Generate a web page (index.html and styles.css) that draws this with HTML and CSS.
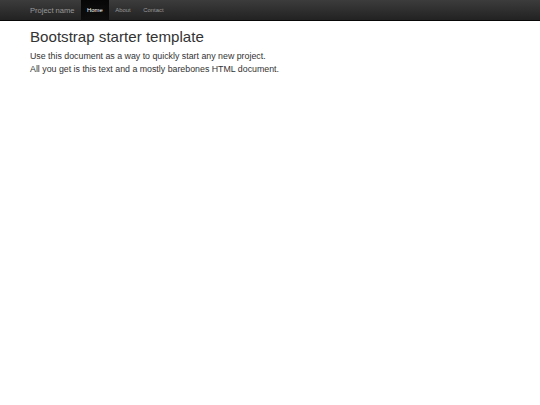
FILE: index.html
```html
<!DOCTYPE html>
<html lang="en">
<head>
<meta charset="utf-8">
<title>Starter Template for Bootstrap</title>
<link rel="stylesheet" href="styles.css">
</head>
<body>
<div class="navbar">
  <div class="container nav-inner">
    <a class="brand" href="#">Project name</a>
    <ul class="nav">
      <li class="active"><a href="#">Home</a></li>
      <li><a href="#about">About</a></li>
      <li><a href="#contact">Contact</a></li>
    </ul>
  </div>
</div>
<div class="container">
  <div class="starter">
    <h1>Bootstrap starter template</h1>
    <p class="lead">Use this document as a way to quickly start any new project.<br> All you get is this text and a mostly barebones HTML document.</p>
  </div>
</div>
</body>
</html>
```
FILE: styles.css
```css
html, body {
  margin: 0;
  padding: 0;
  background: #fff;
}
body {
  font-family: "Liberation Sans", Arial, Helvetica, sans-serif;
  font-size: 5.88px;
  line-height: 8.4px;
  color: #333;
}
.container {
  box-sizing: border-box;
  width: 492.6px;
  padding: 0 6.3px;
  margin: 0 auto;
}
.navbar {
  height: 21px;
  background-image: linear-gradient(to bottom, #3c3c3c 0%, #222 100%);
  border-bottom: 0.5px solid #080808;
  box-sizing: border-box;
}
.nav-inner {
  display: flex;
  height: 100%;
}
.brand {
  display: block;
  font-size: 7.56px;
  line-height: 21px;
  padding: 0 6.3px 0 0;
  color: #999;
  text-decoration: none;
  height: 21px;
}
.nav {
  display: flex;
  margin: 0;
  padding: 0;
  list-style: none;
}
.nav li a {
  display: block;
  padding: 0 6.3px;
  line-height: 20.6px;
  color: #999;
  text-decoration: none;
}
.nav li.active a {
  color: #fff;
  background-image: linear-gradient(to bottom, #080808 0%, #0f0f0f 100%);
  box-shadow: inset 0 1.26px 3.78px rgba(0, 0, 0, 0.25);
}
.starter {
  padding-top: 8.4px;
}
h1 {
  font-size: 15.12px;
  line-height: 16.63px;
  font-weight: 500;
  margin: 0 0 4.2px;
}
.lead {
  font-size: 8.82px;
  line-height: 12.35px;
  margin: 0 0 8.4px;
}
```
